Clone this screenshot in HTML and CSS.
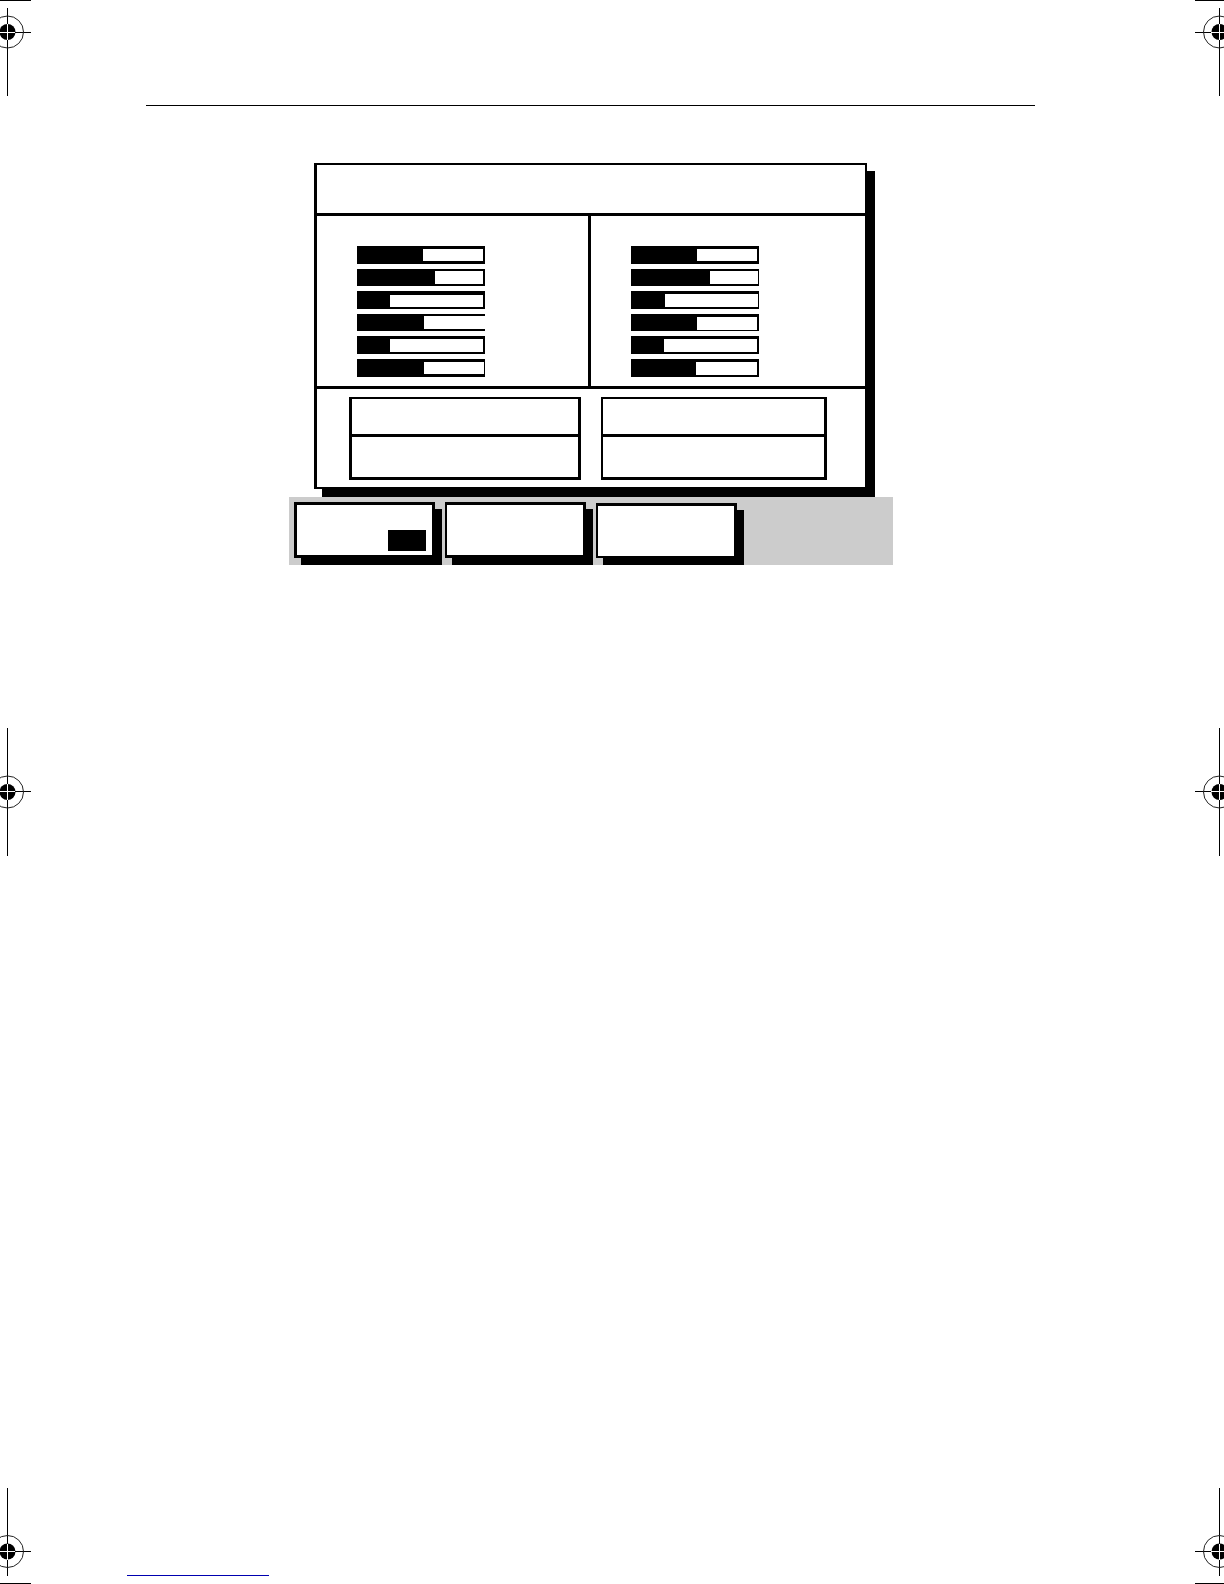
FILE: index.html
```html
<!DOCTYPE html>
<html lang="en">
<head>
  <meta charset="UTF-8" />
  <meta name="viewport" content="width=device-width, initial-scale=1.0" />
  <title>Manual page</title>
  <link rel="stylesheet" href="styles.css">
</head>
<body>
  <div class="marks">
    <svg width="31" height="96" viewBox="0 0 31 96" aria-hidden="true">
      <path class="line" d="M0 .5H31M7.5 8V96M0 32.5H31" />
      <circle class="ring" cx="7.5" cy="32" r="16" />
      <circle cx="7.5" cy="32" r="8" />
      <path class="cross" d="M0 32.5H15M7.5 24V40" />
    </svg>
    <svg width="31" height="128" viewBox="0 0 31 128" aria-hidden="true">
      <path class="line" d="M7.5 0V128M0 63.5H31" />
      <circle class="ring" cx="7.5" cy="64" r="16" />
      <circle cx="7.5" cy="64" r="8" />
      <path class="cross" d="M0 63.5H15M7.5 56V72" />
    </svg>
    <svg width="31" height="96" viewBox="0 0 31 96" aria-hidden="true">
      <path class="line" d="M0 95.5H31M7.5 0V88M0 63.5H31" />
      <circle class="ring" cx="7.5" cy="63.5" r="16" />
      <circle cx="7.5" cy="63.5" r="8" />
      <path class="cross" d="M0 63.5H15M7.5 56V72" />
    </svg>
  </div>

  <div class="page">
    <hr class="rule">
    <main class="display">
      <section class="panel">
        <header class="title"></header>
        <div class="channels">
          <div class="meters">
            <div class="bar"><span style="width: 66px"></span></div>
            <div class="bar slim"><span style="width: 78px"></span></div>
            <div class="bar low"><span style="width: 33px"></span></div>
            <div class="bar slim open"><span style="width: 67px"></span></div>
            <div class="bar tall"><span style="width: 33px"></span></div>
            <div class="bar thin-end"><span style="width: 67px"></span></div>
          </div>
          <div class="meters">
            <div class="bar"><span style="width: 66px"></span></div>
            <div class="bar slim thin-end"><span style="width: 79px"></span></div>
            <div class="bar tall thin-end"><span style="width: 34px"></span></div>
            <div class="bar thin-base"><span style="width: 66px"></span></div>
            <div class="bar tall"><span style="width: 33px"></span></div>
            <div class="bar tall"><span style="width: 65px"></span></div>
          </div>
        </div>
        <div class="readouts">
          <div class="readout wide"><div></div><div></div></div>
          <div class="readout"><div></div><div></div></div>
        </div>
      </section>
      <nav class="softkeys">
        <button type="button" aria-label="Key 1"><span class="state"></span></button>
        <button type="button" class="thin" aria-label="Key 2"></button>
        <button type="button" class="thin short" aria-label="Key 3"></button>
      </nav>
    </main>
    <footer class="footer"><a href="#" aria-label="Footer link"></a></footer>
  </div>

  <div class="marks">
    <svg width="29" height="96" viewBox="0 0 29 96" aria-hidden="true">
      <path class="line" d="M0 .5H29M24.5 8V96M0 32.5H29" />
      <circle class="ring" cx="24.5" cy="32" r="16" />
      <circle cx="24.5" cy="32" r="8" />
      <path class="cross" d="M16 32.5H29M24.5 24V40" />
    </svg>
    <svg width="29" height="128" viewBox="0 0 29 128" aria-hidden="true">
      <path class="line" d="M24.5 0V128M0 63.5H29" />
      <circle class="ring" cx="24.5" cy="64" r="16" />
      <circle cx="24.5" cy="64" r="8" />
      <path class="cross" d="M16 63.5H29M24.5 56V72" />
    </svg>
    <svg width="29" height="96" viewBox="0 0 29 96" aria-hidden="true">
      <path class="line" d="M0 95.5H29M24.5 0V88M0 63.5H29" />
      <circle class="ring" cx="24.5" cy="63.5" r="16" />
      <circle cx="24.5" cy="63.5" r="8" />
      <path class="cross" d="M16 63.5H29M24.5 56V72" />
    </svg>
  </div>
</body>
</html>
```
FILE: styles.css
```css
:root {
  --ink: #000;
  --key-bg: #ccc;
  --link: #0000b0;
}
* { box-sizing: border-box; margin: 0; padding: 0; }
body {
  display: grid;
  grid-template-columns: auto 1fr auto;
  min-height: 100vh;
  background: #fff;
  font-family: "Liberation Sans", sans-serif;
}

/* registration marks */
.marks {
  display: flex; flex-direction: column;
  justify-content: space-between;
}
.marks svg { display: block; }
.line { stroke: var(--ink); fill: none; shape-rendering: crispEdges; }
.ring { stroke: #222; fill: none; }
.cross { stroke: #fff; fill: none; shape-rendering: crispEdges; }

.page {
  display: flex; flex-direction: column;
  padding: 105px 160px 8px 115px;
}
.rule {
  border: 0; border-top: 1px solid var(--ink);
  margin-bottom: 57px;
}
.display {
  width: 100%; max-width: 604px;
  margin: 0 auto;
}

/* main panel */
.panel {
  margin: 0 26px 8px 25px;
  border: 2px solid var(--ink);
  border-left-width: 3px;
  box-shadow: 8px 8px 0 var(--ink);
}
.title { height: 51px; border-bottom: 3px solid var(--ink); }
.channels {
  display: grid; grid-template-columns: 274px 1fr;
  border-bottom: 3px solid var(--ink);
}
.meters {
  display: flex; flex-direction: column; gap: 5px;
  padding: 30px 40px 9px;
}
.meters:first-child { border-right: 3px solid var(--ink); }
.bar {
  display: flex;
  width: 128px; height: 18px;
  border: solid var(--ink);
  border-width: 3px 2px 3px 0;
}
.bar span { background: var(--ink); }
.bar.slim { height: 17px; border-width: 2px 2px 2px 0; }
.bar.low { border-width: 4px 2px 2px 0; }
.bar.tall { border-bottom-width: 2px; }
.bar.thin-base { height: 17px; border-bottom-width: 1px; }
.bar.thin-end { border-right-width: 1px; }
.bar.open { border-right-width: 0; }

.readouts {
  display: flex; gap: 20px;
  padding: 8px 38px 7px 32px;
}
.readout {
  flex: 226 1 0;
  border: solid var(--ink);
  border-width: 2px 3px 3px 2px;
}
.readout.wide { flex-grow: 232; border-left-width: 3px; }
.readout div { height: 40px; }
.readout div:first-child { height: 38px; border-bottom: 3px solid var(--ink); }

/* softkeys */
.softkeys {
  display: flex; align-items: flex-end; gap: 10px;
  height: 68px; padding: 5px 5px 7px;
  background: var(--key-bg);
}
.softkeys button {
  display: flex; align-items: flex-end; justify-content: flex-end;
  width: 141px; height: 56px;
  padding: 0 6px 4px 0;
  border: 3px solid var(--ink); border-radius: 0;
  background: #fff;
  box-shadow: 7px 7px 0 var(--ink);
  cursor: pointer;
}
.softkeys .thin { border-left-width: 2px; }
.softkeys .short { height: 55px; border-bottom-width: 2px; }
.state { width: 38px; height: 21px; background: var(--ink); }

.footer { margin-top: auto; margin-left: -19px; }
.footer a {
  display: block;
  width: 142px; height: 20px;
  border-bottom: 1px solid var(--link);
}
```
